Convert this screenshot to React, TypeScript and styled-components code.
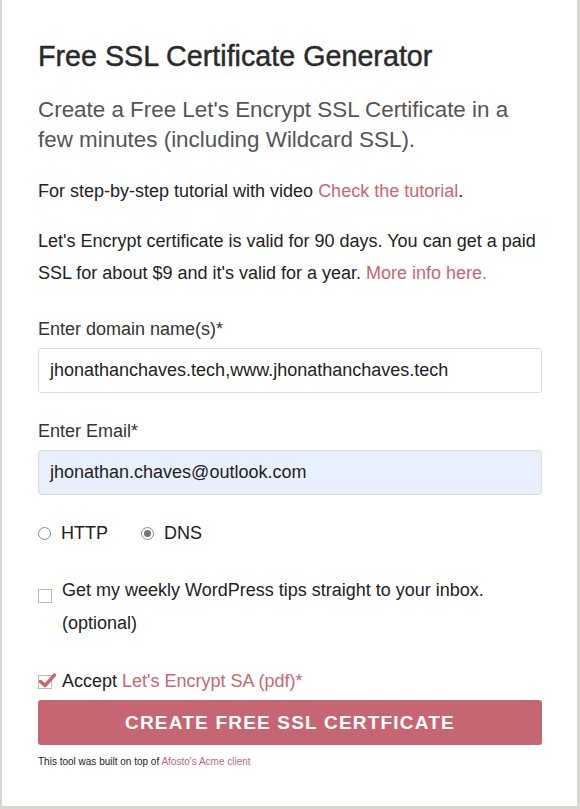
import React from "react";
import styled, { createGlobalStyle } from "styled-components";

const Global = createGlobalStyle`
  html, body { margin: 0; padding: 0; background: #fff; }
  body { font-family: "Liberation Sans", Arial, sans-serif; color: #222; }
  * { box-sizing: border-box; }
`;

const Card = styled.div`
  width: 580px;
  height: 809px;
  background: #fff;
  border-left: 2px solid #d8d8d3;
  border-right: 3px solid #d8d8d3;
  border-bottom: 3px solid #d8d8d3;
  padding: 40px 36px 0 36px;
`;

const Title = styled.h1`
  margin: 0;
  font-size: 28.7px;
  font-weight: normal;
  color: #2a2a2a;
  -webkit-text-stroke: 0.45px #2a2a2a;
  line-height: 32px;
`;

const Subtitle = styled.p`
  margin: 23px 0 0 0;
  font-size: 22.4px;
  line-height: 30px;
  color: #555;
`;

const Para = styled.p<{ $mt: number }>`
  margin: ${(p) => p.$mt}px 0 0 0;
  font-size: 18px;
  line-height: 32px;
  color: #222;
`;

const Link = styled.a`
  color: #c86673;
  text-decoration: none;
`;

const Label = styled.label<{ $mt: number }>`
  display: block;
  margin-top: ${(p) => p.$mt}px;
  font-size: 18px;
  line-height: 24px;
  color: #333;
`;

const Input = styled.div<{ $filled?: boolean }>`
  margin-top: 7px;
  height: 45px;
  width: 504px;
  border: 1px solid #ddd;
  border-radius: 3px;
  background: ${(p) => (p.$filled ? "#e8f0fe" : "#fff")};
  padding: 0 11px;
  display: flex;
  align-items: center;
  font-size: 18px;
  color: #222;
`;

const RadioRow = styled.div`
  margin-top: 28px;
  display: flex;
  align-items: center;
  height: 20px;
  font-size: 18px;
  color: #222;
`;

const RadioItem = styled.span<{ $gap: number }>`
  display: inline-flex;
  align-items: center;
  gap: 10px;
  margin-right: ${(p) => p.$gap}px;
`;

const RadioDot = styled.span<{ $on?: boolean }>`
  width: 13px;
  height: 13px;
  border-radius: 50%;
  border: 1px solid #8a8a8a;
  background: #fff;
  display: inline-flex;
  align-items: center;
  justify-content: center;
  &::after {
    content: "";
    display: ${(p) => (p.$on ? "block" : "none")};
    width: 7px;
    height: 7px;
    border-radius: 50%;
    background: #777;
  }
`;

const CheckRow = styled.div<{ $mt: number }>`
  margin-top: ${(p) => p.$mt}px;
  display: flex;
  align-items: flex-start;
  gap: 10px;
  font-size: 18px;
  line-height: 33px;
  color: #222;
`;

const Box = styled.span`
  flex: none;
  width: 14px;
  height: 14px;
  margin-top: 15px;
  border: 1px solid #bbb;
  background: #fff;
`;

const AcceptRow = styled.div`
  margin-top: 31px;
  display: flex;
  align-items: center;
  gap: 5px;
  font-size: 18px;
  line-height: 20px;
  color: #222;
`;

const Button = styled.button`
  margin-top: 9px;
  width: 504px;
  height: 45px;
  border: none;
  border-radius: 3px;
  background: #c76673;
  color: #fff;
  font-family: "Liberation Sans", Arial, sans-serif;
  font-weight: bold;
  font-size: 19px;
  letter-spacing: 1.2px;
  text-transform: uppercase;
  display: flex;
  align-items: center;
  justify-content: center;
`;

const Footer = styled.p`
  margin: 10px 0 0 0;
  font-size: 10px;
  line-height: 14px;
  color: #222;
`;

export default function App() {
  return (
    <>
      <Global />
      <Card>
        <Title>Free SSL Certificate Generator</Title>
        <Subtitle>
          Create a Free Let's Encrypt SSL Certificate in a few minutes (including Wildcard SSL).
        </Subtitle>
        <Para $mt={20}>
          For step-by-step tutorial with video <Link>Check the tutorial</Link>.
        </Para>
        <Para $mt={18}>
          Let's Encrypt certificate is valid for 90 days. You can get a paid SSL for about $9 and
          it's valid for a year. <Link>More info here.</Link>
        </Para>
        <Label $mt={28}>Enter domain name(s)*</Label>
        <Input>jhonathanchaves.tech,www.jhonathanchaves.tech</Input>
        <Label $mt={26}>Enter Email*</Label>
        <Input $filled>jhonathan.chaves@outlook.com</Input>
        <RadioRow>
          <RadioItem $gap={33}>
            <RadioDot />
            HTTP
          </RadioItem>
          <RadioItem $gap={0}>
            <RadioDot $on />
            DNS
          </RadioItem>
        </RadioRow>
        <CheckRow $mt={31}>
          <Box />
          <span>
            Get my weekly WordPress tips straight to your inbox.
            <br />
            (optional)
          </span>
        </CheckRow>
        <AcceptRow>
          <svg width="19" height="16" viewBox="0 0 19 16">
            <rect x="0.5" y="2.5" width="13" height="13" fill="#fff" stroke="#bbb" />
            <path d="M2.5 8.5 L7 12.5 L16.5 2" fill="none" stroke="#c76673" strokeWidth="3.4" strokeLinecap="round" strokeLinejoin="round" />
          </svg>
          <span>
            Accept <Link>Let's Encrypt SA (pdf)*</Link>
          </span>
        </AcceptRow>
        <Button>Create Free SSL Certficate</Button>
        <Footer>
          This tool was built on top of <Link>Afosto's Acme client</Link>
        </Footer>
      </Card>
    </>
  );
}
